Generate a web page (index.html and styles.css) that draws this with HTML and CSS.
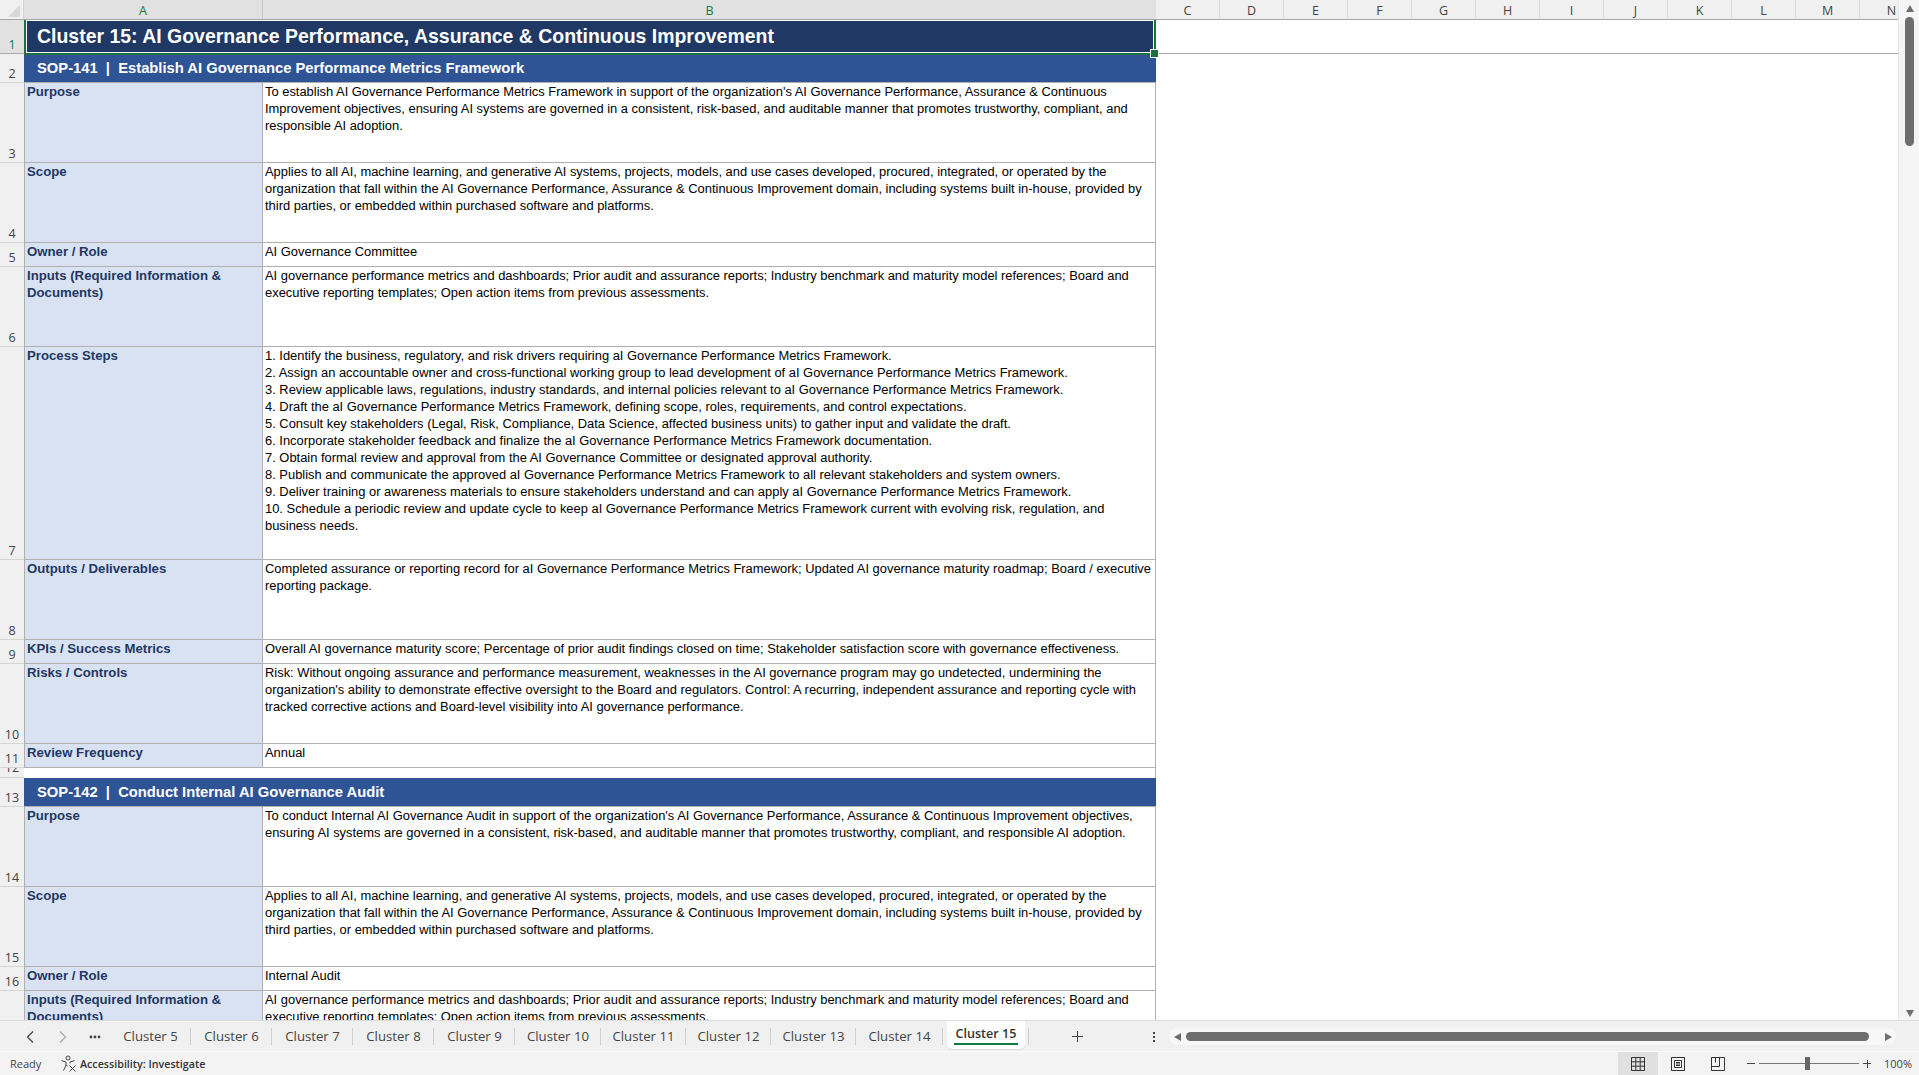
FILE: index.html
```html
<!DOCTYPE html>
<html>
<head>
	<meta charset="utf-8">
	<title>Cluster 15</title>
	<link rel="stylesheet" href="styles.css">
</head>
<body>
<div id="app">

	<!-- grid + vertical scrollbar -->
	<div class="main">
		<div class="grid">

			<!-- column letters -->
			<div class="colhead">
				<div class="corner"><span class="tri"></span></div>
				<div class="col sel colA">A</div>
				<div class="col sel colB">B</div>
				<div class="col">C</div>
				<div class="col">D</div>
				<div class="col">E</div>
				<div class="col">F</div>
				<div class="col">G</div>
				<div class="col">H</div>
				<div class="col">I</div>
				<div class="col">J</div>
				<div class="col">K</div>
				<div class="col">L</div>
				<div class="col">M</div>
				<div class="col">N</div>
			</div>

			<!-- sheet -->
			<div class="sheet">
				<table>
					<colgroup>
						<col class="c-num"><col class="c-a"><col class="c-b"><col>
					</colgroup>
					<tr class="r34">
						<th class="on"><div class="n">1</div></th>
						<td colspan="2" class="title">Cluster 15: AI Governance Performance, Assurance &amp; Continuous Improvement</td>
						<td class="rest line"></td>
					</tr>
					<tr class="r29">
						<th><div class="n">2</div></th>
						<td colspan="2" class="sop">SOP-141 &nbsp;|&nbsp; Establish AI Governance Performance Metrics Framework</td>
						<td class="rest"></td>
					</tr>
					<tr class="r80">
						<th><div class="n">3</div></th>
						<td class="lbl">Purpose</td>
						<td class="val">To establish AI Governance Performance Metrics Framework in support of the organization's AI Governance Performance, Assurance &amp; Continuous Improvement objectives, ensuring AI systems are governed in a consistent, risk-based, and auditable manner that promotes trustworthy, compliant, and responsible AI adoption.</td>
						<td class="rest"></td>
					</tr>
					<tr class="r80">
						<th><div class="n">4</div></th>
						<td class="lbl">Scope</td>
						<td class="val">Applies to all AI, machine learning, and generative AI systems, projects, models, and use cases developed, procured, integrated, or operated by the organization that fall within the AI Governance Performance, Assurance &amp; Continuous Improvement domain, including systems built in-house, provided by third parties, or embedded within purchased software and platforms.</td>
						<td class="rest"></td>
					</tr>
					<tr class="r24">
						<th><div class="n">5</div></th>
						<td class="lbl">Owner / Role</td>
						<td class="val">AI Governance Committee</td>
						<td class="rest"></td>
					</tr>
					<tr class="r80">
						<th><div class="n">6</div></th>
						<td class="lbl">Inputs (Required Information &amp; Documents)</td>
						<td class="val">AI governance performance metrics and dashboards; Prior audit and assurance reports; Industry benchmark and maturity model references; Board and executive reporting templates; Open action items from previous assessments.</td>
						<td class="rest"></td>
					</tr>
					<tr class="r213">
						<th><div class="n">7</div></th>
						<td class="lbl">Process Steps</td>
						<td class="val">1. Identify the business, regulatory, and risk drivers requiring aI Governance Performance Metrics Framework.<br>
						2. Assign an accountable owner and cross-functional working group to lead development of aI Governance Performance Metrics Framework.<br>
						3. Review applicable laws, regulations, industry standards, and internal policies relevant to aI Governance Performance Metrics Framework.<br>
						4. Draft the aI Governance Performance Metrics Framework, defining scope, roles, requirements, and control expectations.<br>
						5. Consult key stakeholders (Legal, Risk, Compliance, Data Science, affected business units) to gather input and validate the draft.<br>
						6. Incorporate stakeholder feedback and finalize the aI Governance Performance Metrics Framework documentation.<br>
						7. Obtain formal review and approval from the AI Governance Committee or designated approval authority.<br>
						8. Publish and communicate the approved aI Governance Performance Metrics Framework to all relevant stakeholders and system owners.<br>
						9. Deliver training or awareness materials to ensure stakeholders understand and can apply aI Governance Performance Metrics Framework.<br>
						10. Schedule a periodic review and update cycle to keep aI Governance Performance Metrics Framework current with evolving risk, regulation, and business needs.</td>
						<td class="rest"></td>
					</tr>
					<tr class="r80">
						<th><div class="n">8</div></th>
						<td class="lbl">Outputs / Deliverables</td>
						<td class="val">Completed assurance or reporting record for aI Governance Performance Metrics Framework; Updated AI governance maturity roadmap; Board / executive reporting package.</td>
						<td class="rest"></td>
					</tr>
					<tr class="r24">
						<th><div class="n">9</div></th>
						<td class="lbl">KPIs / Success Metrics</td>
						<td class="val">Overall AI governance maturity score; Percentage of prior audit findings closed on time; Stakeholder satisfaction score with governance effectiveness.</td>
						<td class="rest"></td>
					</tr>
					<tr class="r80">
						<th><div class="n">10</div></th>
						<td class="lbl">Risks / Controls</td>
						<td class="val">Risk: Without ongoing assurance and performance measurement, weaknesses in the AI governance program may go undetected, undermining the organization's ability to demonstrate effective oversight to the Board and regulators. Control: A recurring, independent assurance and reporting cycle with tracked corrective actions and Board-level visibility into AI governance performance.</td>
						<td class="rest"></td>
					</tr>
					<tr class="r24">
						<th><div class="n">11</div></th>
						<td class="lbl">Review Frequency</td>
						<td class="val">Annual</td>
						<td class="rest"></td>
					</tr>
					<tr class="r10">
						<th><div class="n clip">12</div></th>
						<td colspan="2" class="gap"></td>
						<td class="rest"></td>
					</tr>
					<tr class="r29">
						<th><div class="n">13</div></th>
						<td colspan="2" class="sop">SOP-142 &nbsp;|&nbsp; Conduct Internal AI Governance Audit</td>
						<td class="rest"></td>
					</tr>
					<tr class="r80">
						<th><div class="n">14</div></th>
						<td class="lbl">Purpose</td>
						<td class="val">To conduct Internal AI Governance Audit in support of the organization's AI Governance Performance, Assurance &amp; Continuous Improvement objectives, ensuring AI systems are governed in a consistent, risk-based, and auditable manner that promotes trustworthy, compliant, and responsible AI adoption.</td>
						<td class="rest"></td>
					</tr>
					<tr class="r80">
						<th><div class="n">15</div></th>
						<td class="lbl">Scope</td>
						<td class="val">Applies to all AI, machine learning, and generative AI systems, projects, models, and use cases developed, procured, integrated, or operated by the organization that fall within the AI Governance Performance, Assurance &amp; Continuous Improvement domain, including systems built in-house, provided by third parties, or embedded within purchased software and platforms.</td>
						<td class="rest"></td>
					</tr>
					<tr class="r24">
						<th><div class="n">16</div></th>
						<td class="lbl">Owner / Role</td>
						<td class="val">Internal Audit</td>
						<td class="rest"></td>
					</tr>
					<tr class="r80">
						<th><div class="n">17</div></th>
						<td class="lbl">Inputs (Required Information &amp; Documents)</td>
						<td class="val">AI governance performance metrics and dashboards; Prior audit and assurance reports; Industry benchmark and maturity model references; Board and executive reporting templates; Open action items from previous assessments.</td>
						<td class="rest"></td>
					</tr>
				</table>
			</div>
		</div>

		<!-- vertical scrollbar -->
		<div class="vscroll">
			<span class="arr up"></span>
			<div class="vthumb"></div>
			<span class="arr down"></span>
		</div>
	</div>

	<!-- sheet tabs -->
	<div class="tabbar">
		<div class="nav">
			<svg width="10" height="14" viewBox="0 0 10 14"><path d="M8 1.5 2.5 7 8 12.5" fill="none" stroke="#444" stroke-width="1.3"/></svg>
			<svg width="10" height="14" viewBox="0 0 10 14"><path d="M2 1.5 7.5 7 2 12.5" fill="none" stroke="#aaa" stroke-width="1.3"/></svg>
			<svg width="12" height="4" viewBox="0 0 12 4"><circle cx="2" cy="2" r="1.4" fill="#444"/><circle cx="6" cy="2" r="1.4" fill="#444"/><circle cx="10" cy="2" r="1.4" fill="#444"/></svg>
		</div>
		<div class="tab">Cluster 5</div>
		<div class="tab">Cluster 6</div>
		<div class="tab">Cluster 7</div>
		<div class="tab">Cluster 8</div>
		<div class="tab">Cluster 9</div>
		<div class="tab">Cluster 10</div>
		<div class="tab">Cluster 11</div>
		<div class="tab">Cluster 12</div>
		<div class="tab">Cluster 13</div>
		<div class="tab">Cluster 14</div>
		<div class="tab active"><span>Cluster 15</span></div>
		<div class="add">
			<svg width="11" height="11" viewBox="0 0 11 11"><path d="M5.5 0v11M0 5.5h11" stroke="#444" stroke-width="1"/></svg>
		</div>
		<div class="kebab"><i></i><i></i><i></i></div>
		<div class="hscroll">
			<span class="arr left"></span>
			<div class="hthumb"></div>
			<span class="arr right"></span>
		</div>
	</div>

	<!-- status bar -->
	<div class="status">
		<span class="ready">Ready</span>
		<svg class="acc" width="17" height="17" viewBox="0 0 17 17" fill="none" stroke="#444" stroke-width="1">
			<circle cx="8" cy="3" r="2"/>
			<path d="M1.5 5.5 6 7v3L3.5 15.5M14.5 5.5 10 7v1.5M6 10l1.5 1"/>
			<path d="M9.5 10.5l6 6M15.5 10.5l-6 6"/>
		</svg>
		<b class="acc-txt">Accessibility: Investigate</b>
		<div class="views">
			<div class="view on">
				<svg width="14" height="14" viewBox="0 0 14 14" fill="none" stroke="#333"><path d="M.5.5h13v13H.5zM.5 4.8h13M.5 9.2h13M4.8.5v13M9.2.5v13"/></svg>
			</div>
			<div class="view">
				<svg width="14" height="14" viewBox="0 0 14 14" fill="none" stroke="#333"><path d="M.5.5h13v13H.5zM3.5 3.5h7v7h-7zM5 5.5h4M5 7h4M5 8.5h4"/></svg>
			</div>
			<div class="view">
				<svg width="14" height="14" viewBox="0 0 14 14" fill="none" stroke="#333"><path d="M.5.5h13v13H.5zM.5 9.5h8V.5M4.5.5v5"/></svg>
			</div>
		</div>
		<div class="zoom">
			<span class="zm"></span>
			<div class="slider"><span class="knob"></span></div>
			<span class="zp"></span>
		</div>
		<span class="pct">100%</span>
	</div>
</div>
</body>
</html>
```

FILE: styles.css
```css
* { margin:0px; padding:0px; box-sizing:border-box; }
html, body { width:100%; height:100%; overflow:hidden; background:#fff; }
body { font-family:"Liberation Sans", Arial, sans-serif; }

#app { display:flex; flex-direction:column; width:1919px; height:1075px; }
.main { display:flex; height:1021px; background:#fff; border-bottom:1px solid #dcdcdc; }
.grid { width:1898px; display:flex; flex-direction:column; overflow:hidden; }

/* column letters */
.colhead { display:flex; height:20px; flex:none; background:#f0f0f0; border-bottom:1px solid #a8a8a8; font:12.5px/21px "Open Sans", sans-serif; color:#444; overflow:hidden; }
.corner { width:24px; flex:none; display:flex; align-items:flex-end; justify-content:flex-end; padding:0 3px 2px 0; border-right:1px solid #d4d4d4; }
.tri { width:0; height:0; border-left:12px solid transparent; border-bottom:12px solid #d8d8d8; }
.col { width:64px; flex:none; text-align:center; border-right:1px solid #d8d8d8; }
.col.sel { background:#e1e1e1; }
.colA { width:239px; color:#107c41; border-right-color:#c8c8c8; }
.colB { width:893px; color:#107c41; border-right:none; }

/* sheet */
.sheet { flex:1; overflow:hidden; }
table { border-collapse:separate; border-spacing:0; table-layout:fixed; width:1898px; }
.c-num { width:24px; }
.c-a { width:239px; }
.c-b { width:893px; }
.r34 { height:34px; }
.r29 { height:29px; }
.r24 { height:24px; }
.r80 { height:80px; }
.r213 { height:213px; }
.r10 { height:10px; }

th { background:#f0f0f0; vertical-align:bottom; font:12.5px/15px "Open Sans", sans-serif; font-weight:normal; color:#444; border-bottom:1px solid #d4d4d4; text-align:center; }
th.on { background:#e1e1e1; color:#107c41; border-bottom:1px solid #a8a8a8; }
.n { padding-bottom:1px; }
.n.clip { height:9px; padding:0 0 2px; overflow:hidden; display:flex; align-items:flex-end; justify-content:center; }

td { vertical-align:top; font-size:12.92px; line-height:17px; color:#000; }
.title { position:relative; background:#1f3864; color:#fff; font-size:19.47px; font-weight:bold; vertical-align:middle; padding:0 0 1px 12px; border-left:1px solid #1f3864; border-right:1px solid #b0b0b0; }
.title:after { content:""; position:absolute; left:-1px; top:-2px; right:-1px; bottom:-1px; border:2px solid #1d6f42; box-shadow:inset 0 0 0 1px #fff; }
.title:before { content:""; position:absolute; right:-4px; bottom:-4px; width:7px; height:7px; background:#1d6f42; border:1px solid #fff; z-index:2; }
.sop { background:#2f5496; color:#fff; font-size:14.75px; font-weight:bold; vertical-align:middle; padding-left:13px; border-bottom:1px solid #b0b0b0; }
.lbl { background:#d9e2f3; color:#1f3864; font-size:13.2px; font-weight:bold; padding:0 2px 0 2px; border-left:1px solid #b0b0b0; border-right:1px solid #b0b0b0; border-bottom:1px solid #b0b0b0; }
.val { padding:0 2px 0 2px; border-right:1px solid #b0b0b0; border-bottom:1px solid #b0b0b0; }
.gap { border-right:1px solid #b0b0b0; }
.rest.line { border-bottom:1px solid #a8a8a8; }

/* scrollbars */
.vscroll { width:21px; flex:none; background:#f5f5f5; position:relative; display:flex; flex-direction:column; align-items:center; padding-left:1px; border-left:1px solid #e6e6e6; }
.arr { width:0; height:0; display:block; flex:none; border-style:solid; border-color:transparent; }
.arr.up { border-width:0 4px 7px 4px; border-bottom-color:#6e6e6e; margin-top:5px; }
.arr.down { border-width:7px 4px 0 4px; border-top-color:#6e6e6e; margin-bottom:3px; }
.vthumb { width:9px; height:129px; margin-top:5px; margin-bottom:auto; background:#6e6e6e; border-radius:5px; }

/* tabs */
.tabbar { height:31px; flex:none; display:flex; align-items:flex-start; background:#f0f0f0; border-bottom:1px solid #fff; font:13.2px/31px "Open Sans", sans-serif; color:#444; }
.nav { width:110px; height:31px; flex:none; display:flex; align-items:center; padding-left:25px; }
.nav svg:nth-child(2) { margin-left:23px; }
.nav svg:nth-child(3) { margin-left:21px; }
.tab { position:relative; width:81px; flex:none; text-align:center; height:31px; }
.tab:after { content:""; position:absolute; right:0; top:7px; height:17px; border-right:1px solid #d0d0d0; }
.tab:nth-child(7) { width:86px; }
.tab:nth-child(8), .tab:nth-child(9), .tab:nth-child(10) { width:85px; }
.tab:nth-child(11) { width:87px; }
.tab.active { width:78px; height:28px; margin-left:4px; background:#fff; border-radius:0 0 5px 5px; font-size:12.6px; font-weight:600; color:#333; line-height:25px; box-shadow:0 1px 1px #ddd; }
.tab.active span { display:block; width:64px; margin:0 auto; border-bottom:2px solid #107c41; height:24px; white-space:nowrap; }
.tab.active:after { right:-4px; }
.add { width:11px; flex:none; margin-left:47px; display:flex; align-items:center; height:31px; }
.kebab { width:3px; flex:none; margin-left:70px; height:31px; display:flex; flex-direction:column; justify-content:center; gap:2px; }
.kebab i { display:block; width:2px; height:2px; background:#444; }
.hscroll { width:727px; height:17px; flex:none; margin:7px 0 0 13px; background:#f7f7f7; border-radius:8px; display:flex; align-items:center; padding:0 4px 0 5px; }
.arr.left { border-width:4px 7px 4px 0; border-right-color:#6e6e6e; }
.arr.right { border-width:4px 0 4px 7px; border-left-color:#6e6e6e; }
.hthumb { width:683px; height:9px; margin:0 auto 0 5px; background:#6e6e6e; border-radius:5px; }

/* status bar */
.status { height:23px; flex:none; display:flex; align-items:center; background:#f3f3f3; font:11px/22px "Open Sans", sans-serif; color:#444; }
.ready { width:60px; flex:none; padding-left:10px; }
.acc { flex:none; }
.acc-txt { margin-left:3px; font-weight:600; color:#333; font-size:10.7px; }
.views { display:flex; margin-left:auto; height:23px; }
.view { width:40px; display:flex; align-items:center; justify-content:center; }
.view.on { background:#e0e0e0; }
.zoom { display:flex; align-items:center; margin-left:9px; }
.zm { width:8px; height:1px; background:#444; }
.slider { position:relative; width:100px; height:1px; margin:0 4px; background:#777; }
.knob { position:absolute; left:46px; top:-6px; width:5px; height:13px; background:#666; }
.zp { width:8px; height:8px; background:linear-gradient(#444,#444) center/8px 1px no-repeat, linear-gradient(#444,#444) center/1px 8px no-repeat; }
.pct { width:48px; flex:none; text-align:right; padding-right:7px; }
```
